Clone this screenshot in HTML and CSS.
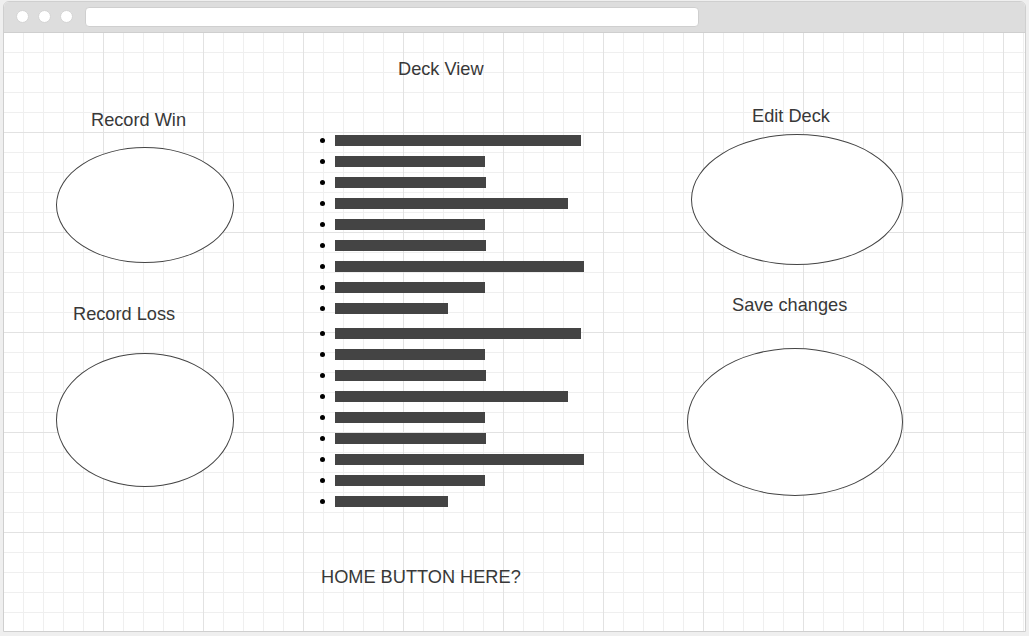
FILE: index.html
```html
<!DOCTYPE html>
<html lang="en">
<head>
<meta charset="utf-8">
<title>Deck View mockup</title>
<link rel="stylesheet" href="styles.css">
</head>
<body>
<div class="window">
  <div class="topbar">
    <span class="dot"></span>
    <span class="dot"></span>
    <span class="dot"></span>
    <span class="address"></span>
  </div>
  <div class="canvas">
    <div class="col col-left">
      <div class="label label-win">Record Win</div>
      <div class="ellipse ellipse-win"></div>
      <div class="label label-loss">Record Loss</div>
      <div class="ellipse ellipse-loss"></div>
    </div>
    <div class="col col-center">
      <div class="label label-deck">Deck View</div>
      <ul class="cards">
        <li><span class="bar" style="width:246px"></span></li>
        <li><span class="bar" style="width:150px"></span></li>
        <li><span class="bar" style="width:151px"></span></li>
        <li><span class="bar" style="width:233px"></span></li>
        <li><span class="bar" style="width:150px"></span></li>
        <li><span class="bar" style="width:151px"></span></li>
        <li><span class="bar" style="width:249px"></span></li>
        <li><span class="bar" style="width:150px"></span></li>
        <li><span class="bar" style="width:113px"></span></li>
      </ul>
      <ul class="cards cards-second">
        <li><span class="bar" style="width:246px"></span></li>
        <li><span class="bar" style="width:150px"></span></li>
        <li><span class="bar" style="width:151px"></span></li>
        <li><span class="bar" style="width:233px"></span></li>
        <li><span class="bar" style="width:150px"></span></li>
        <li><span class="bar" style="width:151px"></span></li>
        <li><span class="bar" style="width:249px"></span></li>
        <li><span class="bar" style="width:150px"></span></li>
        <li><span class="bar" style="width:113px"></span></li>
      </ul>
      <div class="label label-home">HOME BUTTON HERE?</div>
    </div>
    <div class="col col-right">
      <div class="label label-edit">Edit Deck</div>
      <div class="ellipse ellipse-edit"></div>
      <div class="label label-save">Save changes</div>
      <div class="ellipse ellipse-save"></div>
    </div>
  </div>
</div>
</body>
</html>
```
FILE: styles.css
```css
* {
  box-sizing: border-box;
}

html, body {
  margin: 0;
  padding: 0;
  background: #efefef;
  font-family: "Liberation Sans", Arial, sans-serif;
}

.window {
  margin: 1px 0 0 3px;
  width: 1023px;
  height: 631px;
  border: 1px solid #cfcfcf;
  border-radius: 6px 6px 0 0;
  display: flex;
  flex-direction: column;
  overflow: hidden;
  background: #fff;
}

.topbar {
  flex: 0 0 31px;
  background: #dddddd;
  border-bottom: 1px solid #cfcfcf;
  display: flex;
  align-items: center;
  padding: 0 0 1px 12px;
}

.dot {
  width: 13px;
  height: 13px;
  border-radius: 50%;
  background: #fff;
  border: 1px solid #d4d4d4;
  margin-right: 9px;
}

.address {
  margin-left: 3px;
  width: 614px;
  height: 20px;
  background: #fff;
  border: 1px solid #cfcfcf;
  border-radius: 4px;
}

.canvas {
  flex: 1;
  display: grid;
  grid-template-columns: 300px 376px 1fr;
  background-color: #fff;
  background-image:
    linear-gradient(to right, #e2e2e2 1px, transparent 1px),
    linear-gradient(to bottom, #e2e2e2 1px, transparent 1px),
    linear-gradient(to right, #efefef 1px, transparent 1px),
    linear-gradient(to bottom, #efefef 1px, transparent 1px);
  background-size: 100px 100px, 100px 100px, 20px 20px, 20px 20px;
  background-position: -1px -1px;
}

.col {
  display: flex;
  flex-direction: column;
  align-items: flex-start;
}

.label {
  font-size: 18.2px;
  line-height: 20px;
  color: #383838;
  white-space: nowrap;
}

.ellipse {
  border: 1px solid #444;
  border-radius: 50%;
  background: #fff;
}

/* left column */
.label-win { margin: 77px 0 0 87px; }
.ellipse-win { margin: 17px 0 0 52px; width: 178px; height: 116px; }
.label-loss { margin: 41px 0 0 69px; }
.ellipse-loss { margin: 29px 0 0 52px; width: 178px; height: 134px; }

/* center column */
.label-deck { margin: 26px 0 0 94px; }

.cards {
  list-style: none;
  margin: 51px 0 0 0;
  padding: 0;
}

.cards-second {
  margin-top: 4px;
}

.cards li {
  height: 21px;
  display: flex;
  align-items: center;
  padding-left: 16px;
}

.cards li::before {
  content: "";
  width: 5px;
  height: 5px;
  border-radius: 50%;
  background: #000;
  margin-right: 10px;
}

.bar {
  display: block;
  height: 11px;
  background: #444;
}

.label-home { margin: 55px 0 0 17px; }

/* right column */
.label-edit { margin: 73px 0 0 72px; }
.ellipse-edit { margin: 8px 0 0 11px; width: 212px; height: 131px; }
.label-save { margin: 30px 0 0 52px; }
.ellipse-save { margin: 33px 0 0 7px; width: 216px; height: 148px; }
```
